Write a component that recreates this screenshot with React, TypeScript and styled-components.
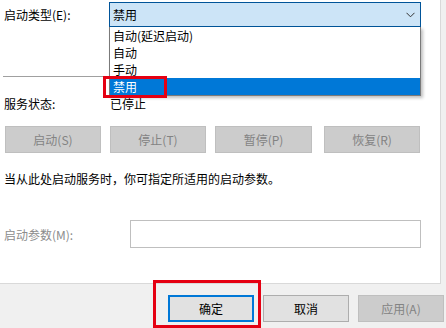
import React from "react";
import styled, { createGlobalStyle } from "styled-components";

const Global = createGlobalStyle`
  html, body { margin: 0; padding: 0; background: #f0f0f0; }
  body { width: 446px; height: 328px; overflow: hidden;
    font-family: "Noto Sans CJK SC", "Noto Sans", sans-serif; font-size: 12px; color: #000; }
`;

const Window = styled.div`
  position: relative;
  width: 446px;
  height: 328px;
  background: #f0f0f0;
  overflow: hidden;
`;

const Panel = styled.div`
  box-sizing: border-box;
  width: 441px;
  height: 284px;
  background: #fff;
  border-right: 1px solid #d9d9d9;
  border-bottom: 1px solid #d9d9d9;
  display: flex;
  flex-direction: column;
`;

const Row = styled.div<{ $top: number; $h: number }>`
  display: flex;
  align-items: center;
  margin-top: ${(p) => p.$top}px;
  height: ${(p) => p.$h}px;
  padding-left: 4px;
`;

const Label = styled.span<{ $w: number; $disabled?: boolean }>`
  width: ${(p) => p.$w}px;
  flex: none;
  white-space: nowrap;
  color: ${(p) => (p.$disabled ? "#8c8c8c" : "#000")};
`;

const Combo = styled.div`
  box-sizing: border-box;
  width: 312px;
  height: 25px;
  background: #cce4f7;
  border: 1px solid #005499;
  display: flex;
  align-items: center;
  justify-content: space-between;
  padding: 0 5px 0 3px;
`;

const Separator = styled.div`
  margin: 49px 20px 0 3px;
  height: 1px;
  background: #a0a0a0;
`;

const ButtonRow = styled.div`
  display: flex;
  margin-top: 14px;
  padding-left: 5px;
  gap: 9px;
`;

const Btn = styled.div<{ $w: number; $extra?: number; $primary?: boolean; $disabled?: boolean }>`
  box-sizing: border-box;
  width: ${(p) => p.$w}px;
  height: 27px;
  margin-left: ${(p) => p.$extra ?? 0}px;
  display: flex;
  align-items: center;
  justify-content: center;
  background: ${(p) => (p.$disabled ? "#cccccc" : "#e1e1e1")};
  border: ${(p) =>
    p.$primary ? "2px solid #0078d7" : p.$disabled ? "1px solid #bfbfbf" : "1px solid #adadad"};
  color: ${(p) => (p.$disabled ? "#838383" : "#000")};
  white-space: nowrap;
`;

const Desc = styled.div`
  margin-top: 17px;
  height: 18px;
  line-height: 18px;
  padding-left: 4px;
  white-space: nowrap;
`;

const Input = styled.div`
  box-sizing: border-box;
  width: 291px;
  height: 28px;
  border: 1px solid #bfbfbf;
  background: #fff;
`;

const Footer = styled.div`
  display: flex;
  justify-content: flex-end;
  gap: 9px;
  padding: 11px 2px 0 0;
`;

const DropList = styled.div`
  position: absolute;
  left: 109px;
  top: 27px;
  width: 312px;
  box-sizing: border-box;
  border: 1px solid #7a7a7a;
  border-top: none;
  background: #fff;
  box-shadow: 2px 2px 3px rgba(0, 0, 0, 0.25);
`;

const Item = styled.div<{ $selected?: boolean }>`
  height: 17px;
  line-height: 17px;
  padding-left: 3px;
  background: ${(p) => (p.$selected ? "#0078d7" : "transparent")};
  color: ${(p) => (p.$selected ? "#fff" : "#000")};
  white-space: nowrap;
`;

const Highlight = styled.div<{ $x: number; $y: number; $w: number; $h: number }>`
  position: absolute;
  box-sizing: border-box;
  left: ${(p) => p.$x}px;
  top: ${(p) => p.$y}px;
  width: ${(p) => p.$w}px;
  height: ${(p) => p.$h}px;
  border: 3px solid #e50012;
`;

const Chevron = () => (
  <svg width="9" height="6" viewBox="0 0 9 6">
    <polyline points="0.5,0.8 4.5,4.8 8.5,0.8" fill="none" stroke="#333" strokeWidth="1" />
  </svg>
);

export default function App() {
  const items = ["自动(延迟启动)", "自动", "手动", "禁用"];
  return (
    <Window>
      <Global />
      <Panel>
        <Row $top={2} $h={25}>
          <Label $w={105}>启动类型(E):</Label>
          <Combo>
            <span>禁用</span>
            <Chevron />
          </Combo>
        </Row>
        <Separator />
        <Row $top={17} $h={18}>
          <Label $w={106}>服务状态:</Label>
          <span>已停止</span>
        </Row>
        <ButtonRow>
          <Btn $w={96} $disabled>启动(S)</Btn>
          <Btn $w={96} $disabled>停止(T)</Btn>
          <Btn $w={97} $disabled>暂停(P)</Btn>
          <Btn $w={96} $extra={3} $disabled>恢复(R)</Btn>
        </ButtonRow>
        <Desc>当从此处启动服务时，你可指定所适用的启动参数。</Desc>
        <Row $top={32} $h={28}>
          <Label $w={126} $disabled>启动参数(M):</Label>
          <Input />
        </Row>
      </Panel>
      <Footer>
        <Btn $w={86} $primary>确定</Btn>
        <Btn $w={86}>取消</Btn>
        <Btn $w={86} $disabled>应用(A)</Btn>
      </Footer>
      <DropList>
        {items.map((t, i) => (
          <Item key={t} $selected={i === 3}>{t}</Item>
        ))}
      </DropList>
      <Highlight $x={103} $y={76} $w={64} $h={22} />
      <Highlight $x={153} $y={280} $w={108} $h={48} />
    </Window>
  );
}
